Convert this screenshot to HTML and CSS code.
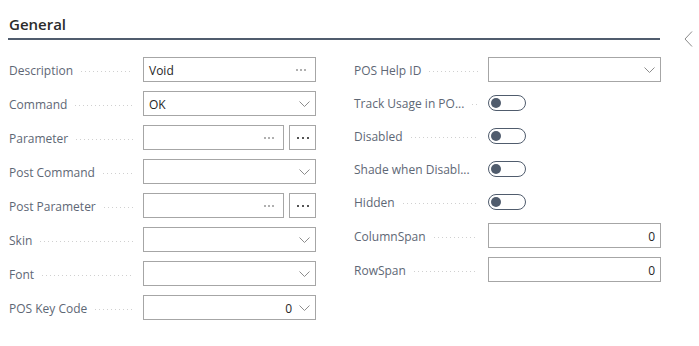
FILE: index.html
```html
<!DOCTYPE html>
<html>
<head>
<meta charset="utf-8">
<link rel="stylesheet" href="styles.css">
</head>
<body>
<div class="page">
  <div class="main">
    <div class="header"><h2 class="title">General</h2></div>
    <div class="cols">
      <div class="col">
        <div class="row">
          <div class="label"><span class="ltext">Description</span><span class="leader"></span></div>
          <div class="field"><span class="value">Void</span><span class="ell"><i></i><i></i><i></i></span></div>
        </div>
        <div class="row">
          <div class="label"><span class="ltext">Command</span><span class="leader"></span></div>
          <div class="field"><span class="value">OK</span><svg class="chev" width="11" height="6" viewBox="0 0 11 6"><path d="M0.5 0.5 L5.5 5.5 L10.5 0.5" fill="none" stroke="#8c8c8c" stroke-width="1"/></svg></div>
        </div>
        <div class="row">
          <div class="label"><span class="ltext">Parameter</span><span class="leader"></span></div>
          <div class="fieldwrap">
            <div class="field short"><span class="value"></span><span class="ell"><i></i><i></i><i></i></span></div>
            <div class="btn"><i></i><i></i><i></i></div>
          </div>
        </div>
        <div class="row">
          <div class="label"><span class="ltext">Post Command</span><span class="leader"></span></div>
          <div class="field"><span class="value"></span><svg class="chev" width="11" height="6" viewBox="0 0 11 6"><path d="M0.5 0.5 L5.5 5.5 L10.5 0.5" fill="none" stroke="#8c8c8c" stroke-width="1"/></svg></div>
        </div>
        <div class="row">
          <div class="label"><span class="ltext">Post Parameter</span><span class="leader"></span></div>
          <div class="fieldwrap">
            <div class="field short"><span class="value"></span><span class="ell"><i></i><i></i><i></i></span></div>
            <div class="btn"><i></i><i></i><i></i></div>
          </div>
        </div>
        <div class="row">
          <div class="label"><span class="ltext">Skin</span><span class="leader"></span></div>
          <div class="field"><span class="value"></span><svg class="chev" width="11" height="6" viewBox="0 0 11 6"><path d="M0.5 0.5 L5.5 5.5 L10.5 0.5" fill="none" stroke="#8c8c8c" stroke-width="1"/></svg></div>
        </div>
        <div class="row">
          <div class="label"><span class="ltext">Font</span><span class="leader"></span></div>
          <div class="field"><span class="value"></span><svg class="chev" width="11" height="6" viewBox="0 0 11 6"><path d="M0.5 0.5 L5.5 5.5 L10.5 0.5" fill="none" stroke="#8c8c8c" stroke-width="1"/></svg></div>
        </div>
        <div class="row">
          <div class="label"><span class="ltext">POS Key Code</span><span class="leader"></span></div>
          <div class="field"><span class="value num">0</span><svg class="chev" width="11" height="6" viewBox="0 0 11 6"><path d="M0.5 0.5 L5.5 5.5 L10.5 0.5" fill="none" stroke="#8c8c8c" stroke-width="1"/></svg></div>
        </div>
      </div>
      <div class="col">
        <div class="row">
          <div class="label"><span class="ltext">POS Help ID</span><span class="leader"></span></div>
          <div class="field"><span class="value"></span><svg class="chev" width="11" height="6" viewBox="0 0 11 6"><path d="M0.5 0.5 L5.5 5.5 L10.5 0.5" fill="none" stroke="#8c8c8c" stroke-width="1"/></svg></div>
        </div>
        <div class="row trow">
          <div class="label"><span class="ltext">Track Usage in PO...</span><span class="leader"></span></div>
          <div class="toggle"><span class="knob"></span></div>
        </div>
        <div class="row trow">
          <div class="label"><span class="ltext">Disabled</span><span class="leader"></span></div>
          <div class="toggle"><span class="knob"></span></div>
        </div>
        <div class="row trow">
          <div class="label"><span class="ltext">Shade when Disabl...</span><span class="leader"></span></div>
          <div class="toggle"><span class="knob"></span></div>
        </div>
        <div class="row trow">
          <div class="label"><span class="ltext">Hidden</span><span class="leader"></span></div>
          <div class="toggle"><span class="knob"></span></div>
        </div>
        <div class="row">
          <div class="label"><span class="ltext">ColumnSpan</span><span class="leader"></span></div>
          <div class="field"><span class="value num">0</span></div>
        </div>
        <div class="row">
          <div class="label"><span class="ltext">RowSpan</span><span class="leader"></span></div>
          <div class="field"><span class="value num">0</span></div>
        </div>
      </div>
    </div>
  </div>
  <div class="side">
    <svg width="10" height="16" viewBox="0 0 10 16"><path d="M8 0.5 L1 8 L8 15.5" fill="none" stroke="#8a8a8a" stroke-width="1"/></svg>
  </div>
</div>
</body>
</html>
```
FILE: styles.css
```css
* { box-sizing: border-box; }
html, body { margin: 0; padding: 0; background: #fff; }
body {
  font-family: "Open Sans", "Noto Sans", sans-serif;
  font-size: 12px;
  color: #212121;
}
.page {
  display: flex;
  width: 699px;
  height: 346px;
}
.main {
  width: 660px;
  padding-left: 8px;
}
.header {
  height: 40px;
  border-bottom: 2px solid #505c6d;
  padding-top: 14px;
}
.title {
  margin: 0 0 0 1px;
  font-size: 15px;
  font-weight: 600;
  line-height: 20px;
  color: #2b2b2b;
}
.cols {
  display: flex;
  gap: 38px;
  padding-top: 17px;
  padding-left: 1px;
}
.col {
  width: 307px;
  display: flex;
  flex-direction: column;
  gap: 9px;
}
.row {
  display: flex;
  align-items: center;
  height: 25px;
}
.trow { height: 24px; }
.label {
  width: 134px;
  display: flex;
  align-items: center;
  color: #5e6775;
  white-space: nowrap;
  padding-top: 2px;
}
.ltext { line-height: 16px; }
.leader {
  flex: 1;
  height: 1px;
  margin: 1px 10px 0 8px;
  background-image: linear-gradient(to right, #d0d0d0 1px, transparent 1px);
  background-size: 4px 1px;
  background-repeat: repeat-x;
}
.field {
  width: 173px;
  height: 25px;
  border: 1px solid #a6a6a6;
  display: flex;
  align-items: center;
  padding: 1px 5px 0 5px;
}
.value { flex: 1; color: #262626; }
.value.num { text-align: right; }
.ell {
  display: flex;
  gap: 2px;
  margin-right: 4px;
}
.ell i {
  display: block;
  width: 2px;
  height: 2px;
  background: #b0b0b0;
}
.chev { margin-left: 7px; margin-right: 0; }
.fieldwrap { display: flex; gap: 5px; }
.field.short { width: 141px; }
.btn {
  width: 27px;
  height: 25px;
  border: 1px solid #a6a6a6;
  display: flex;
  align-items: center;
  justify-content: center;
  gap: 3px;
  padding-top: 1px;
}
.btn i {
  display: block;
  width: 2px;
  height: 2px;
  background: #555;
}
.toggle {
  width: 38px;
  height: 16px;
  border: 1px solid #505c6d;
  border-radius: 8px;
  position: relative;
}
.knob {
  position: absolute;
  left: 2px;
  top: 2px;
  width: 10px;
  height: 10px;
  border-radius: 50%;
  background: #505c6d;
}
.side {
  flex: 1;
  padding-top: 31px;
  padding-left: 24px;
}
```
